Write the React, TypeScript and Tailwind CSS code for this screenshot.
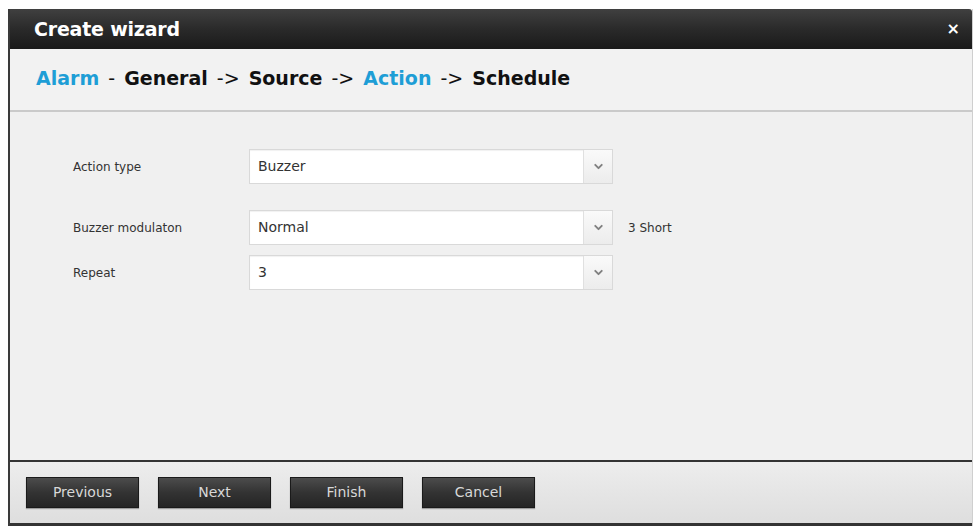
import { ChevronDown } from 'lucide-react'

const steps = [
  { label: 'Alarm', active: true, sep: '-' },
  { label: 'General', active: false, sep: '->' },
  { label: 'Source', active: false, sep: '->' },
  { label: 'Action', active: true, sep: '->' },
  { label: 'Schedule', active: false, sep: '' },
]

const fields = [
  { label: 'Action type', value: 'Buzzer', note: '', gap: 'mt-0' },
  { label: 'Buzzer modulaton', value: 'Normal', note: '3 Short', gap: 'mt-[26px]' },
  { label: 'Repeat', value: '3', note: '', gap: 'mt-[10px]' },
]

const buttons = ['Previous', 'Next', 'Finish', 'Cancel']

function SelectBox({ value }: { value: string }) {
  return (
    <div className="flex h-[35px] w-[364px] border border-[#d9d9d9] bg-white shadow-[inset_0_1px_1px_rgba(0,0,0,0.06)]">
      <div className="flex flex-1 items-center pl-[8px] text-[14px] text-[#333]">{value}</div>
      <div className="flex w-[29px] items-center justify-center border-l border-[#e0e0e0] bg-gradient-to-b from-[#fafafa] to-[#ececec]">
        <ChevronDown className="h-[13px] w-[13px] text-[#808080]" strokeWidth={3.5} />
      </div>
    </div>
  )
}

export default function App() {
  return (
    <div className="h-[526px] overflow-hidden bg-white pl-[8px] pt-[9px] font-['DejaVu_Sans',sans-serif]">
      <div className="flex h-[517px] w-[965px] flex-col border-l-2 border-r border-[#3a3a3a] border-r-[#cfcfcf]">
        {/* title bar */}
        <div className="flex h-[40px] items-center justify-between rounded-tr-[3px] bg-gradient-to-b from-[#404040] via-[#2a2a2a] to-[#1a1a1a] pl-[24px] pr-[12px]">
          <span className="text-[19px] font-bold tracking-[-0.2px] text-white">Create wizard</span>
          <span className="text-[16px] font-bold leading-none text-white">×</span>
        </div>

        {/* steps */}
        <div className="flex h-[63px] items-center whitespace-pre border-b-2 border-[#cacaca] bg-[#f2f2f2] pb-[2px] pl-[26px]">
          {steps.map((s) => (
            <span key={s.label} className="text-[19px]">
              <span className={`font-bold ${s.active ? 'text-[#1e9ed6]' : 'text-[#111]'}`}>{s.label}</span>
              {s.sep && <span className="px-[3px] text-[#111]">{` ${s.sep} `}</span>}
            </span>
          ))}
        </div>

        {/* form */}
        <div className="flex-1 border-b-2 border-[#333] bg-[#f0f0f0] pl-[63px] pt-[37px]">
          {fields.map((f) => (
            <div key={f.label} className={`flex items-center ${f.gap}`}>
              <span className="w-[176px] text-[12px] text-[#333]">{f.label}</span>
              <SelectBox value={f.value} />
              {f.note && <span className="ml-[15px] text-[12px] text-[#333]">{f.note}</span>}
            </div>
          ))}
        </div>

        {/* footer */}
        <div className="flex h-[64px] items-start gap-[19px] border-b-[3px] border-[#333] bg-gradient-to-b from-[#ededed] to-[#dedede] pl-[16px] pt-[15px]">
          {buttons.map((b) => (
            <button
              key={b}
              className="h-[31px] w-[113px] border border-[#1a1a1a] bg-gradient-to-b from-[#4c4c4c] via-[#333] to-[#252525] text-[14px] text-[#d8d8d8] shadow-[0_1px_1px_rgba(0,0,0,0.3)]"
            >
              {b}
            </button>
          ))}
        </div>
      </div>
    </div>
  )
}
